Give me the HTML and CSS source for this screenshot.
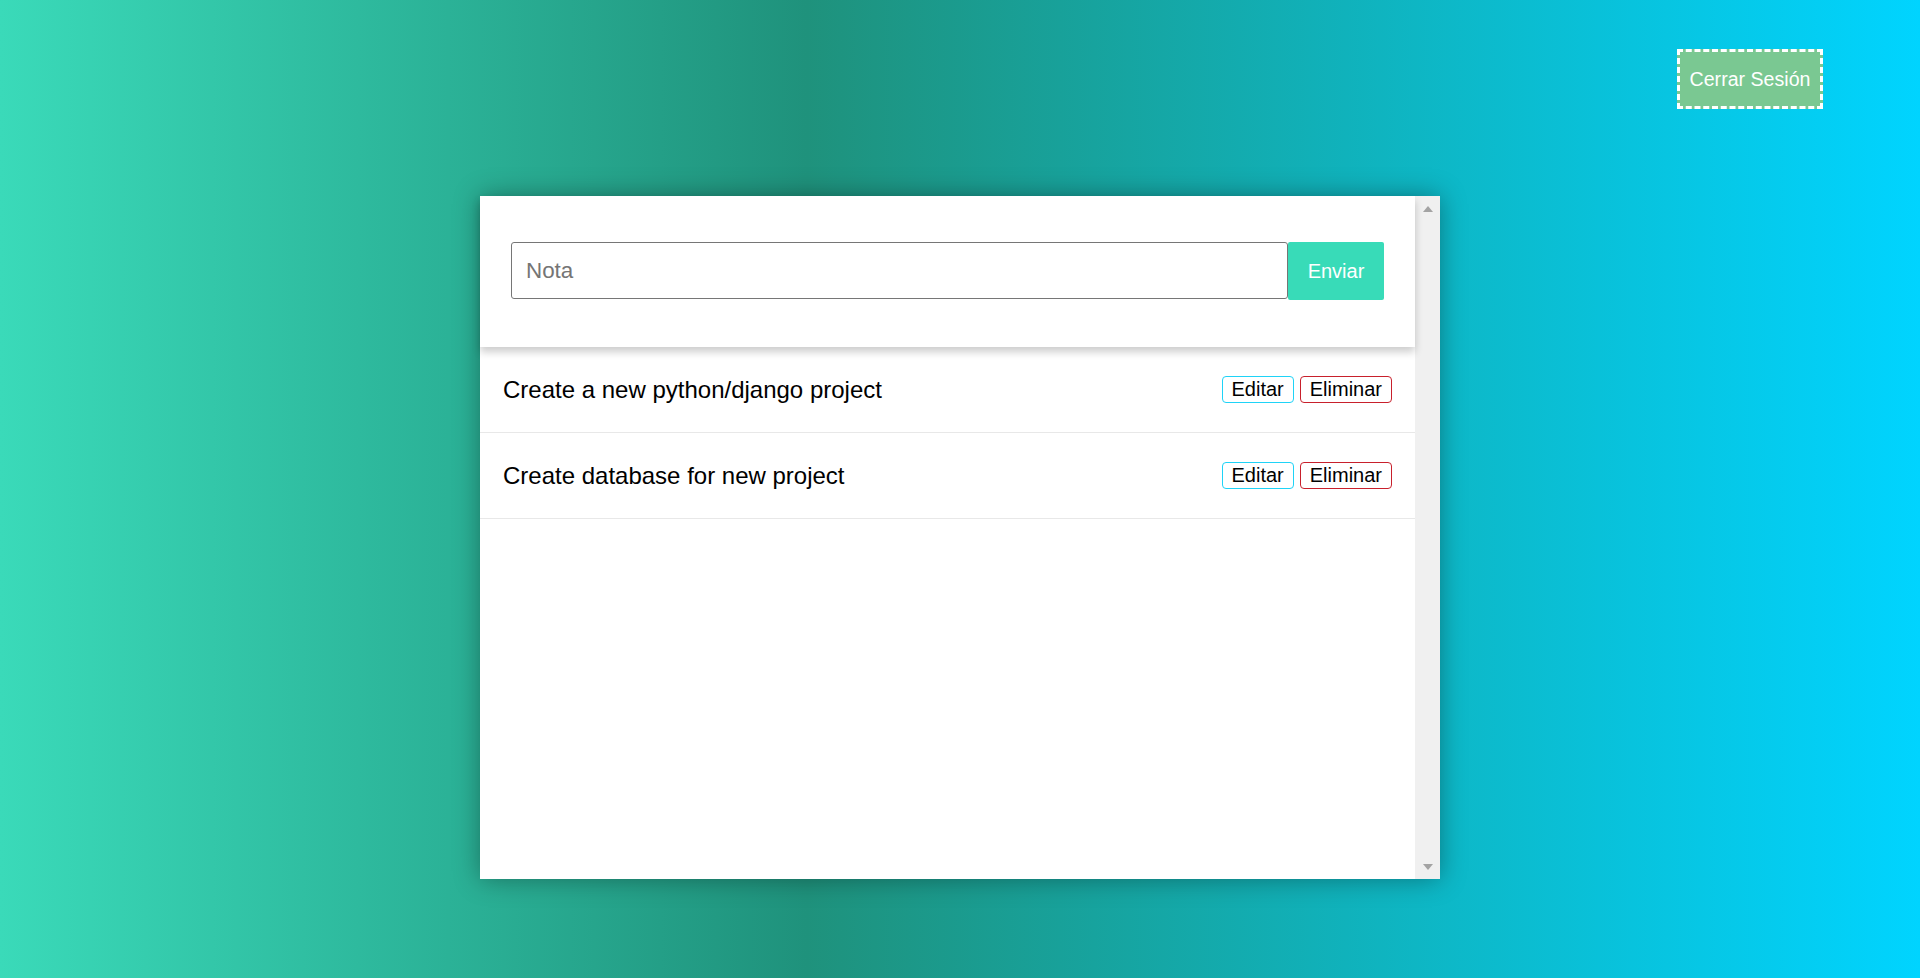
FILE: index.html
```html
<!DOCTYPE html>
<html lang="es">
<head>
<meta charset="utf-8">
<title>Notas</title>
<link rel="stylesheet" href="styles.css">
</head>
<body>
<header class="top">
  <button class="logout">Cerrar Sesión</button>
</header>
<main class="card">
  <div class="card-body">
    <form class="note-form">
      <input class="note-input" type="text" placeholder="Nota">
      <button class="send" type="button">Enviar</button>
    </form>
    <ul class="notes">
      <li class="note">
        <span class="note-text">Create a new python/django project</span>
        <span class="actions">
          <button class="btn btn-edit">Editar</button>
          <button class="btn btn-delete">Eliminar</button>
        </span>
      </li>
      <li class="note">
        <span class="note-text">Create database for new project</span>
        <span class="actions">
          <button class="btn btn-edit">Editar</button>
          <button class="btn btn-delete">Eliminar</button>
        </span>
      </li>
    </ul>
  </div>
  <div class="scrollbar">
    <span class="arrow arrow-up"></span>
    <span class="arrow arrow-down"></span>
  </div>
</main>
</body>
</html>
```
FILE: styles.css
```css
* { box-sizing: border-box; }
html, body { height: 100%; }
body {
  margin: 0;
  font-family: "Liberation Sans", Arial, sans-serif;
  background: linear-gradient(90deg, #3adab9 0%, #1f927c 42%, #00d4ff 100%);
  overflow: hidden;
}
.top {
  display: flex;
  justify-content: flex-end;
  padding: 49px 97px 0 0;
  height: 196px;
}
.logout {
  align-self: flex-start;
  background: #7ac892;
  color: #fff;
  border: 3px dashed #fff;
  font-family: "Liberation Sans", Arial, sans-serif;
  font-size: 19.6px;
  line-height: 22px;
  padding: 16px 0;
  width: 146px;
  height: 60px;
  cursor: pointer;
}
.card {
  width: 960px;
  height: 683px;
  margin: 0 auto;
  background: #fff;
  display: flex;
  box-shadow: 0 0 24px rgba(0, 0, 0, 0.35);
}
.card-body {
  flex: 1;
  min-width: 0;
}
.note-form {
  position: relative;
  z-index: 1;
  display: flex;
  height: 151px;
  padding: 46px 31px 0 31px;
  margin: 0;
  background: #fff;
  box-shadow: 0 5px 8px rgba(0, 0, 0, 0.2);
}
.note-input {
  flex: 1;
  height: 57px;
  border: 1px solid #767676;
  border-radius: 3px;
  padding: 0 14px;
  font-family: "Liberation Sans", Arial, sans-serif;
  font-size: 22.4px;
  color: #333;
}
.note-input::placeholder { color: #757575; }
.send {
  width: 96px;
  height: 58px;
  border: none;
  border-radius: 2px;
  background: #38dbb8;
  color: #fff;
  font-family: "Liberation Sans", Arial, sans-serif;
  font-size: 20px;
  padding: 0;
}
.notes {
  list-style: none;
  margin: 0;
  padding: 0;
}
.note {
  display: flex;
  align-items: center;
  justify-content: space-between;
  height: 86px;
  padding: 0 23px 0 23px;
  border-bottom: 1px solid #e8e8e8;
}
.note-text {
  font-size: 24px;
  color: #000;
}
.actions {
  display: flex;
  gap: 6px;
}
.btn {
  background: #fff;
  color: #000;
  font-family: "Liberation Sans", Arial, sans-serif;
  font-size: 20px;
  line-height: 23px;
  padding: 1px 9px;
  border-radius: 4px;
  border: 1px solid;
}
.btn-edit { border-color: #1fd3f7; }
.btn-delete { border-color: #c8202c; }
.scrollbar {
  width: 25px;
  background: #f0f0f0;
  display: flex;
  flex-direction: column;
  justify-content: space-between;
  align-items: center;
  padding: 10px 0 9px 0;
}
.arrow {
  width: 0;
  height: 0;
  border-left: 5px solid transparent;
  border-right: 5px solid transparent;
}
.arrow-up { border-bottom: 6px solid #a3a3a3; }
.arrow-down { border-top: 6px solid #a3a3a3; }
```
